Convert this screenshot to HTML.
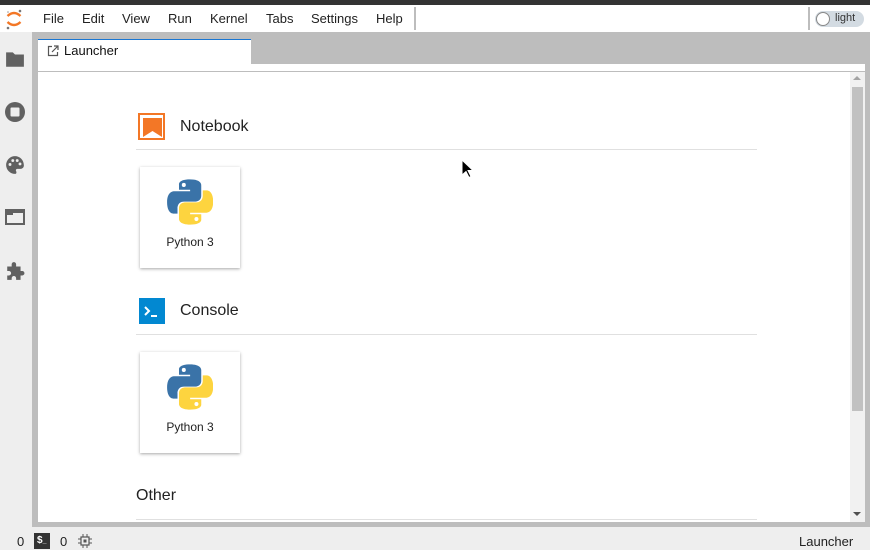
<!DOCTYPE html>
<html><head><meta charset="utf-8"><style>
*{margin:0;padding:0;box-sizing:border-box}
body{width:870px;height:550px;overflow:hidden;font-family:"Liberation Sans",sans-serif;background:#eee;position:relative}
.abs{position:absolute}
.menu span{position:absolute;top:6px;font-size:13px;color:#222}
.sec{position:absolute;left:136px;width:621px;border-bottom:1px solid #e0e0e0}
.sec .t{position:absolute;left:44px;font-size:16px;color:#222}
.card{position:absolute;left:140px;width:100px;height:101px;background:#fff;box-shadow:0 1px 3px rgba(0,0,0,.35)}
.card .l{position:absolute;top:68px;width:100%;text-align:center;font-size:12px;color:#222}
.card svg{position:absolute;left:27px;top:12px}
.st{position:absolute;top:534px;font-size:13px;color:#222}
</style></head><body>
<div class="abs" style="left:0;top:0;width:870px;height:5px;background:#333"></div>
<div class="abs menu" style="left:0;top:5px;width:870px;height:27px;background:#fff">
<svg class="abs" style="left:5px;top:3px" width="18" height="22" viewBox="0 0 18 22"><path d="M2.5 8 Q9 2 15.5 8" stroke="#f37726" stroke-width="2.4" fill="none"/><path d="M2.5 14 Q9 20 15.5 14" stroke="#f37726" stroke-width="2.4" fill="none"/><circle cx="15" cy="3" r="1.3" fill="#767677"/><circle cx="3" cy="20" r="1.3" fill="#767677"/><circle cx="3" cy="4" r="0.8" fill="#989798"/></svg>
<span style="left:43px">File</span><span style="left:82px">Edit</span><span style="left:122px">View</span><span style="left:168px">Run</span><span style="left:210px">Kernel</span><span style="left:266px">Tabs</span><span style="left:311px">Settings</span><span style="left:376px">Help</span>
<div class="abs" style="left:414px;top:2px;width:2px;height:23px;background:#bdbdbd"></div>
<div class="abs" style="left:808px;top:2px;width:2px;height:23px;background:#bdbdbd"></div>
<div class="abs" style="left:815px;top:6px;width:49px;height:16px;border-radius:8px;background:#d3dbe2"></div>
<div class="abs" style="left:816px;top:7px;width:14px;height:14px;border-radius:50%;background:#fff;border:1px solid #888"></div>
<span style="left:835px;top:7px;font-size:11px;color:#333">light</span>
</div>
<div class="abs" style="left:0;top:32px;width:32px;height:495px;background:#eee"></div>
<svg class="abs" style="left:5px;top:49px" width="20" height="20" viewBox="0 0 18 18"><path d="M1 3h6l2 2h8v11H1z" fill="#616161"/></svg>
<svg class="abs" style="left:4px;top:101px" width="22" height="22"><circle cx="11" cy="11" r="10" fill="#616161"/><rect x="6.5" y="6.5" width="9" height="9" rx="1" fill="#eee"/></svg>
<svg class="abs" style="left:5px;top:155px" width="20" height="20" viewBox="0 0 18 18"><path d="M9 1a8 8 0 0 0 0 16c1.5 0 1.5-1.5 1-2.5-.6-1 0-2 1.2-2H14a3 3 0 0 0 3-3C17 4.5 13.4 1 9 1z" fill="#616161"/><circle cx="4.5" cy="8.5" r="1.3" fill="#eee"/><circle cx="7" cy="5" r="1.3" fill="#eee"/><circle cx="11" cy="5" r="1.3" fill="#eee"/><circle cx="13.5" cy="8" r="1.3" fill="#eee"/></svg>
<svg class="abs" style="left:5px;top:208px" width="20" height="18"><rect x="1" y="2" width="18" height="14" fill="none" stroke="#616161" stroke-width="2"/><rect x="1" y="2" width="18" height="3" fill="#616161"/><rect x="1" y="2" width="7" height="5" fill="#616161"/></svg>
<svg class="abs" style="left:5px;top:261px" width="20" height="20" viewBox="0 0 18 18"><path d="M2 5h4V3a2 2 0 0 1 4 0v2h4v4h1.5a2 2 0 0 1 0 4H14v4H10v-1.5a2 2 0 0 0-4 0V17H2v-4h1.5a2 2 0 0 0 0-4H2z" fill="#616161"/></svg>
<div class="abs" style="left:32px;top:32px;width:838px;height:495px;background:#bdbdbd"></div>
<div class="abs" style="left:38px;top:39px;width:213px;height:26px;background:#fff;border-top:1px solid #1976d2"></div>
<svg class="abs" style="left:47px;top:45px" width="12" height="12" viewBox="0 0 12 12"><path d="M5 1.5H1.5v9h9V7" stroke="#555" stroke-width="1.2" fill="none"/><path d="M7 1h4v4M11 1 5 7" stroke="#555" stroke-width="1.2" fill="none"/></svg>
<div class="abs" style="left:64px;top:43px;font-size:13px;color:#111">Launcher</div>
<div class="abs" style="left:38px;top:64px;width:827px;height:458px;background:#fff"></div>
<div class="abs" style="left:38px;top:71px;width:827px;height:1px;background:#bdbdbd"></div>
<div class="abs" style="left:850px;top:72px;width:15px;height:450px;background:#f1f1f1"></div>
<div class="abs" style="left:852px;top:87px;width:11px;height:324px;background:#c1c1c1"></div>
<div class="abs" style="left:853px;top:76px;width:0;height:0;border:4px solid transparent;border-bottom:4px solid #a3a3a3;border-top:0"></div>
<div class="abs" style="left:853px;top:512px;width:0;height:0;border:4px solid transparent;border-top:4px solid #505050;border-bottom:0"></div>

<div class="sec" style="top:112px;height:38px"><div class="abs" style="left:2px;top:1px;width:27px;height:27px;border:2px solid #f37726;padding:3px"><svg width="19" height="19"><path d="M0 0h19v19l-9.5-6L0 19z" fill="#f37726"/></svg></div><div class="t" style="top:6px">Notebook</div></div>
<div class="card" style="top:167px"><svg width="46" height="46" viewBox="0 0 110 110"><path d="M54.9 1C27 1 28.7 13 28.7 13v12.6h26.6v3.8H18.1S.2 27.3.2 55.6s15.6 27.3 15.6 27.3h9.3V69.8s-.5-15.6 15.4-15.6h26.5s14.9.2 14.9-14.4V15.5S84.2 1 54.9 1zM40.2 9.4a4.8 4.8 0 1 1 0 9.6 4.8 4.8 0 0 1 0-9.6z" fill="#3a73a8"/><path d="M55.7 109C83.6 109 81.9 97 81.9 97V84.4H55.3v-3.8h37.2s17.9 2.1 17.9-26.2-15.6-27.3-15.6-27.3h-9.3v13.1s.5 15.6-15.4 15.6H43.6s-14.9-.2-14.9 14.4v24.3S26.4 109 55.7 109zm14.7-8.4a4.8 4.8 0 1 1 0-9.6 4.8 4.8 0 0 1 0 9.6z" fill="#fdd43f"/></svg><div class="l">Python 3</div></div>

<div class="sec" style="top:297px;height:38px"><div class="abs" style="left:3px;top:1px;width:26px;height:26px;background:#0288d1"><svg width="26" height="26"><path d="M6 9l4 4-4 4" stroke="#fff" stroke-width="2" fill="none"/><path d="M12 18h6" stroke="#fff" stroke-width="2"/></svg></div><div class="t" style="top:5px">Console</div></div>
<div class="card" style="top:352px"><svg width="46" height="46" viewBox="0 0 110 110"><path d="M54.9 1C27 1 28.7 13 28.7 13v12.6h26.6v3.8H18.1S.2 27.3.2 55.6s15.6 27.3 15.6 27.3h9.3V69.8s-.5-15.6 15.4-15.6h26.5s14.9.2 14.9-14.4V15.5S84.2 1 54.9 1zM40.2 9.4a4.8 4.8 0 1 1 0 9.6 4.8 4.8 0 0 1 0-9.6z" fill="#3a73a8"/><path d="M55.7 109C83.6 109 81.9 97 81.9 97V84.4H55.3v-3.8h37.2s17.9 2.1 17.9-26.2-15.6-27.3-15.6-27.3h-9.3v13.1s.5 15.6-15.4 15.6H43.6s-14.9-.2-14.9 14.4v24.3S26.4 109 55.7 109zm14.7-8.4a4.8 4.8 0 1 1 0-9.6 4.8 4.8 0 0 1 0 9.6z" fill="#fdd43f"/></svg><div class="l">Python 3</div></div>

<div class="sec" style="top:482px;height:38px"><div class="t" style="left:0;top:5px">Other</div></div>

<svg class="abs" style="left:461px;top:159px" width="12" height="20"><path d="M1 1v15l4-3.5 3 6 2-1-3-6h5z" fill="#000" stroke="#fff" stroke-width="1"/></svg>

<div class="st" style="left:17px">0</div>
<div class="abs" style="left:34px;top:533px;width:16px;height:16px;background:#333;color:#fff;font-size:10px;font-weight:bold;padding:2px 0 0 3px">$<span style="font-size:7px">_</span></div>
<div class="st" style="left:60px">0</div>
<svg class="abs" style="left:78px;top:534px" width="14" height="14"><rect x="3" y="3" width="8" height="8" fill="none" stroke="#555" stroke-width="1.2"/><rect x="5.5" y="5.5" width="3" height="3" fill="#555"/><path d="M5 0v3M9 0v3M5 11v3M9 11v3M0 5h3M0 9h3M11 5h3M11 9h3" stroke="#555"/></svg>
<div class="st" style="left:799px">Launcher</div>
</body></html>
